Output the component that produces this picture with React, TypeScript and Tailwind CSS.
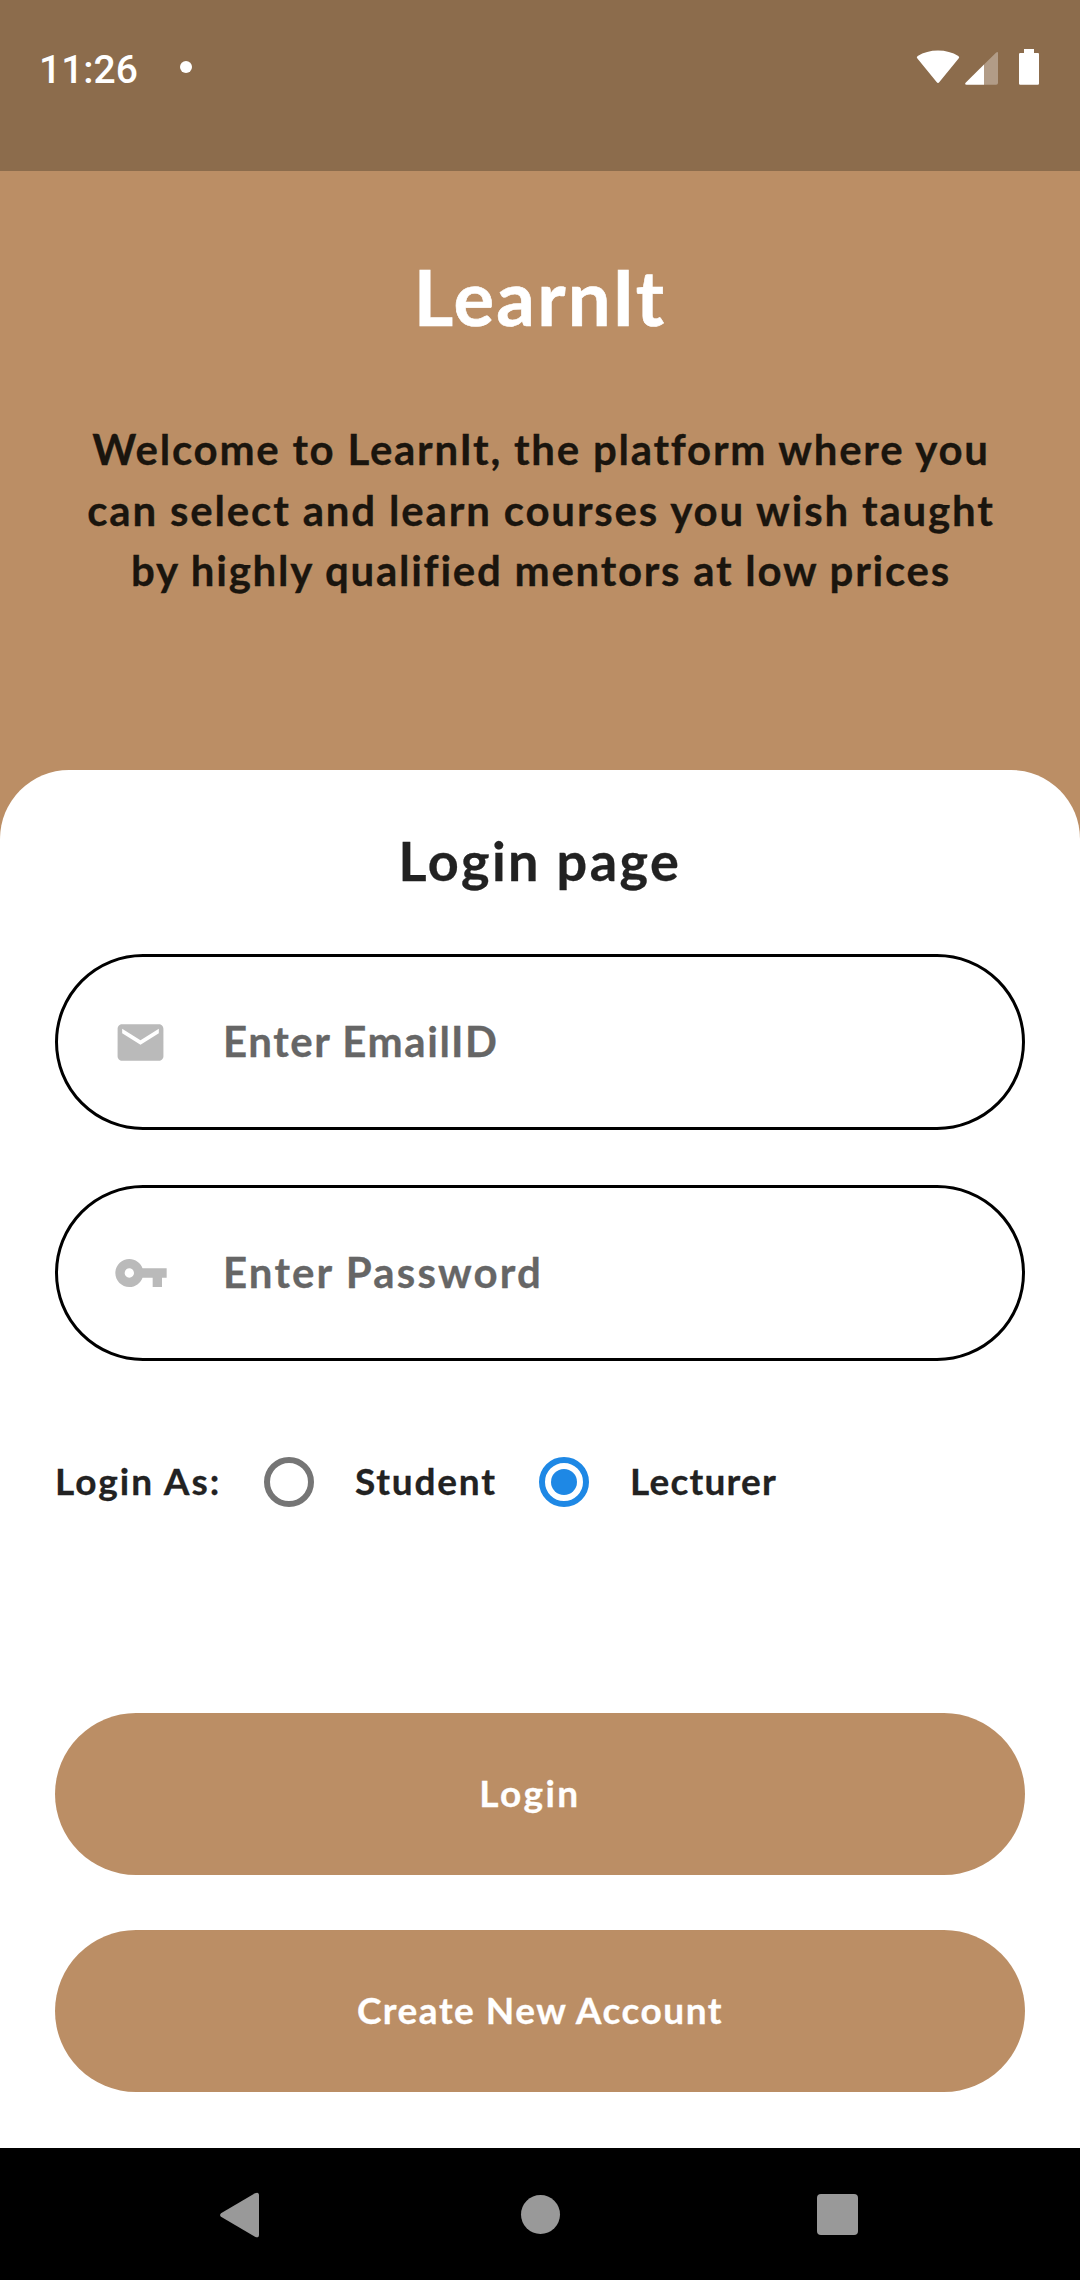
import { useState } from "react";

function StatusBar() {
  return (
    <div className="h-[171px] bg-[#8C6C4C]">
      <div className="flex h-[134px] items-center pr-[40px] pl-[39px]">
        <span className="pt-[5px] font-[Roboto] text-[39px] leading-[40px] font-medium text-white">11:26</span>
        <span className="ml-[42px] size-3 rounded-full bg-white" />
        <svg className="ml-auto h-9 w-11" viewBox="0 0 44 36" fill="#fff">
          <path d="M1.400 9.600Q0 8.100 1.700 6.900Q10.500 1.400 22 1.400T42.300 6.900Q44 8.100 42.600 9.600L23.400 33Q22 34.800 20.600 33Z" />
        </svg>
        <svg className="ml-[5px] h-9 w-[34px]" viewBox="0 0 34 36">
          <path d="M31.200 3.500Q33 2.200 33 4V34Q33 35.800 31.200 35.800H19V15.500Z" fill="#fff" fillOpacity=".33" />
          <path d="M19 15.500V35.800H1.500Q-.6 35.600.6 33.800Z" fill="#fff" />
        </svg>
        <svg className="ml-5 h-9 w-[21px]" viewBox="0 0 21 36" fill="#fff">
          <path d="M5 4V0H15V4H19Q20 4 20 5.200V34.500Q20 35.800 18.800 35.800H1.200Q0 35.800 0 34.500V5.200Q0 4 1.200 4Z" />
        </svg>
      </div>
    </div>
  );
}

function Header() {
  return (
    <header className="h-[599px] pt-[76px] text-center [-webkit-text-stroke:0.3px]">
      <h1 className="text-[76px] leading-[100px] tracking-[2.24px] text-white [-webkit-text-stroke:0.6px]">LearnIt</h1>
      <p className="mt-[72px] pl-[2px] text-[42px] leading-[60.500px] whitespace-nowrap text-[#1A150E]">
        <span className="block tracking-[1.74px]">Welcome to LearnIt, the platform where you</span>
        <span className="block tracking-[1.83px]">can select and learn courses you wish taught</span>
        <span className="block tracking-[1.74px]">by highly qualified mentors at low prices</span>
      </p>
    </header>
  );
}

const fieldBox = "flex h-[176px] items-center rounded-full border-[3px] border-black pr-14 pl-[54.500px]";
const inputBase =
  "ml-[55.500px] h-[120px] min-w-0 flex-1 bg-transparent pb-[3px] text-[42px] text-[#222] outline-none placeholder:text-[#666]";

function Radio({ checked, onSelect, label }: { checked: boolean; onSelect: () => void; label: string }) {
  return (
    <button
      type="button"
      role="radio"
      aria-checked={checked}
      aria-label={label}
      onClick={onSelect}
      className={
        checked
          ? "flex size-[50px] shrink-0 items-center justify-center rounded-full border-[6px] border-[#1E88E5]"
          : "flex size-[50px] shrink-0 items-center justify-center rounded-full border-[6px] border-[#757575]"
      }
    >
      {checked && <span className="size-[26px] rounded-full bg-[#1E88E5]" />}
    </button>
  );
}

function NavBar() {
  return (
    <nav className="flex h-[132px] items-center bg-black pt-[1px] pl-[220px]">
      <svg className="h-[46px] w-10" viewBox="0 0 40 46" fill="#999">
        <path d="M1 21.200L35 1.200Q39 -.6 39 3.500V42.500Q39 46.600 35 44.800L1 24.800Q-.8 23 1 21.200Z" />
      </svg>
      <span className="ml-[261px] size-[39px] rounded-full bg-[#999]" />
      <span className="ml-[257px] size-[41px] rounded-[4px] bg-[#999]" />
    </nav>
  );
}

export default function App() {
  const [role, setRole] = useState("lecturer");
  return (
    <div className="flex h-[2280px] w-[1080px] flex-col overflow-hidden bg-[#BB8E65] font-[Lato,sans-serif] font-bold">
      <StatusBar />
      <Header />
      <main className="flex-1 rounded-t-[69px] bg-white px-[55px] pt-[59px] [-webkit-text-stroke:0.3px]">
        <h2 className="text-center text-[54px] leading-[64px] tracking-[2.46px] text-[#222]">Login page</h2>

        <div className={`mt-[61px] ${fieldBox}`}>
          <svg className="size-[55px]" viewBox="0 0 24 24" fill="#BABABA">
            <path d="M20 4H4c-1.100 0-1.990.9-1.990 2L2 18c0 1.100.9 2 2 2h16c1.100 0 2-.9 2-2V6c0-1.100-.9-2-2-2zm0 4l-8 5-8-5V6l8 5 8-5v2z" />
          </svg>
          <input className={`${inputBase} tracking-[1.56px]`} placeholder="Enter EmailID" />
        </div>

        <div className={`mt-[55px] ${fieldBox}`}>
          <svg className="-mr-px size-[56px]" viewBox="0 0 24 24" fill="#BABABA">
            <path d="M12.650 10C11.830 7.670 9.610 6 7 6c-3.310 0-6 2.690-6 6s2.690 6 6 6c2.610 0 4.830-1.670 5.650-4H17v4h4v-4h2v-4H12.650zM7 14c-1.100 0-2-.9-2-2s.9-2 2-2 2 .9 2 2-.9 2-2 2z" />
          </svg>
          <input className={`${inputBase} tracking-[2.15px]`} type="text" placeholder="Enter Password" />
        </div>

        <div role="radiogroup" className="mt-[77px] flex h-[88px] items-center text-[37px] leading-[44px] text-[#222]">
          <span className="w-[209px] pb-[2px] tracking-[1.99px]">Login As:</span>
          <Radio label="Student" checked={role === "student"} onSelect={() => setRole("student")} />
          <span className="ml-[41px] w-[184px] pb-[2px] tracking-[1.8px]">Student</span>
          <Radio label="Lecturer" checked={role === "lecturer"} onSelect={() => setRole("lecturer")} />
          <span className="ml-[41px] pb-[2px] tracking-[1.21px]">Lecturer</span>
        </div>

        <button className="mt-[187px] block h-[162px] w-full rounded-full bg-[#BB8E65] pr-5 pb-[2px] text-[37px] tracking-[2.42px] text-white">
          Login
        </button>
        <button className="mt-[55px] block h-[162px] w-full rounded-full bg-[#BB8E65] pb-[2px] text-[37px] tracking-[1.5px] text-white">
          Create New Account
        </button>
      </main>
      <NavBar />
    </div>
  );
}
